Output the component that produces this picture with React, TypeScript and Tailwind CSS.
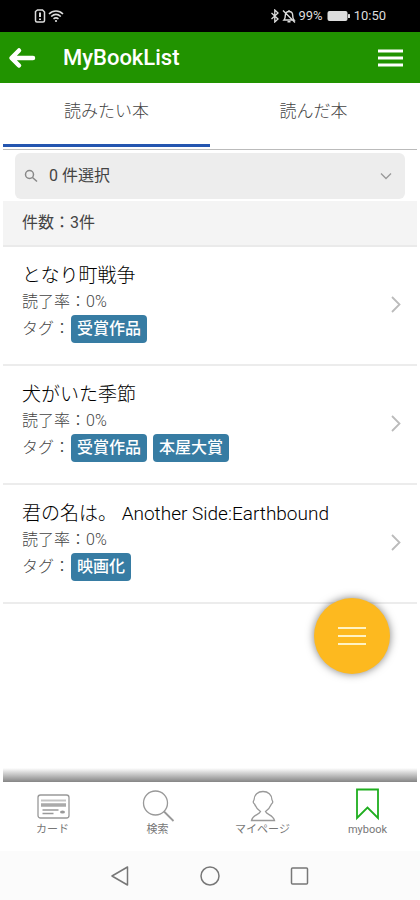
import { useState } from 'react';
import type { ReactNode } from 'react';

interface Book {
  id: number;
  title: string;
  progress: number;
  tags: string[];
}

const BOOKS: Book[] = [
  { id: 1, title: 'となり町戦争', progress: 0, tags: ['受賞作品'] },
  { id: 2, title: '犬がいた季節', progress: 0, tags: ['受賞作品', '本屋大賞'] },
  { id: 3, title: '君の名は。 Another Side:Earthbound', progress: 0, tags: ['映画化'] },
];

const TABS = ['読みたい本', '読んだ本'];

export default function App() {
  const [tab, setTab] = useState(0);

  return (
    <div className="flex min-h-screen flex-col bg-white font-[Roboto,'Noto_Sans_CJK_JP',sans-serif] text-[#444]">
      <StatusBar />
      <header className="flex h-[51px] items-center bg-[#219300] px-2 text-white">
        <button aria-label="戻る" className="w-7">
          <svg width="28" height="22" viewBox="0 0 28 22" fill="none" stroke="currentColor" strokeWidth="4.500" strokeLinecap="round" strokeLinejoin="round">
            <path d="M25 11H4M11 3.500L3.500 11l7.500 7.500" />
          </svg>
        </button>
        <h1 className="ml-[27px] flex-1 text-[22px] leading-7 font-medium">MyBookList</h1>
        <button aria-label="メニュー" className="mr-2">
          <svg width="26" height="20" viewBox="0 0 26 20" fill="none" stroke="currentColor" strokeWidth="3">
            <path d="M0 3h25M0 10h25M0 17h25" />
          </svg>
        </button>
      </header>

      <main className="relative flex-1 px-[3px]">
        <div role="tablist" className="flex h-[67px] border-b border-[#bbb]">
          {TABS.map((label, i) => (
            <button
              key={label}
              role="tab"
              aria-selected={tab === i}
              onClick={() => setTab(i)}
              className={`mb-0.5 flex-1 border-b-3 pb-1 text-[17px] font-light ${
                tab === i ? 'border-[#2456b0]' : 'border-transparent'
              }`}
            >
              {label}
            </button>
          ))}
        </div>

        <div className="relative mx-3 mt-[3px] mb-0.5">
          <SearchIcon className="pointer-events-none absolute top-4 left-[9px] size-[14px] text-[#888]" />
          <select
            aria-label="タグ選択"
            className="h-[46px] w-full appearance-none rounded-md bg-[#ededed] pl-[34px] text-base text-[#444]"
          >
            <option>0 件選択</option>
          </select>
          <svg className="pointer-events-none absolute top-[19px] right-[13px]" width="12" height="8" viewBox="0 0 12 8" fill="none" stroke="#999" strokeWidth="1.300">
            <path d="M1 1.500l5 5 5-5" />
          </svg>
        </div>

        <p className="flex h-[46px] items-center border-b-2 border-[#eaeaea] bg-[#f4f4f4] px-[19px] text-base">
          件数：{BOOKS.length}件
        </p>

        <ul>
          {BOOKS.map((book) => (
            <BookRow key={book.id} book={book} />
          ))}
        </ul>

        <button
          aria-label="操作メニュー"
          className="absolute right-[30px] bottom-[108px] flex size-[76px] items-center justify-center rounded-full bg-[#fdb91f] shadow-[0_0_8px_rgba(0,0,0,0.5)]"
        >
          <svg width="28" height="22" viewBox="0 0 28 22" fill="none" stroke="#fff3c4" strokeWidth="2">
            <path d="M0 3h28M0 11h28M0 19h28" />
          </svg>
        </button>
        <div className="absolute inset-x-[3px] bottom-0 h-[14px] bg-linear-to-b from-transparent to-[#858585]" />
      </main>

      <BottomNav />
      <SystemNav />
    </div>
  );
}

function StatusBar() {
  return (
    <div className="flex h-8 items-center justify-between bg-black px-[34px] text-[13px] text-[#ddd]">
      <div className="flex items-center gap-0.5">
        <svg width="12" height="14" viewBox="0 0 12 14" fill="none" stroke="currentColor" strokeWidth="1.500">
          <path d="M1.500 2.500L3.500 1h5l2 2v8.500a1.500 1.500 0 0 1-1.500 1.500H3a1.500 1.500 0 0 1-1.500-1.500z" />
          <path d="M6 3.500v4.500M6 9.500v1.500" strokeWidth="2" />
        </svg>
        <svg width="16" height="14" viewBox="0 0 16 14" fill="none" stroke="currentColor" strokeWidth="1.600">
          <path d="M1 5c4-4 10-4 14 0M3.200 7.500c3-2.700 6.600-2.700 9.600 0M5.500 9.800c1.700-1.300 3.300-1.300 5 0" />
          <circle cx="8" cy="12" r="1.100" fill="currentColor" stroke="none" />
        </svg>
      </div>
      <div className="flex items-center gap-0.5">
        <svg width="10" height="14" viewBox="0 0 10 14" fill="none" stroke="currentColor" strokeWidth="1.300">
          <path d="M1.500 4l6.500 6-3.200 3V1L8 4l-6.500 6" />
        </svg>
        <svg width="14" height="14" viewBox="0 0 14 14" fill="none" stroke="currentColor" strokeWidth="1.400">
          <path d="M2 11h10c-1-1-1.300-2-1.300-4.500C10.700 4 9.200 2.500 7 2.500S3.300 4 3.300 6.500C3.300 9 3 10 2 11zM5.500 12.800h3M7 1v1.500M1 1.500l12 12" />
        </svg>
        <span>99%</span>
        <svg className="mx-0.5" width="23" height="12" viewBox="0 0 23 12" fill="currentColor">
          <rect x="0.500" y="1" width="20" height="10" rx="2" />
          <rect x="21" y="4" width="2" height="4" rx="0.500" />
        </svg>
        <span>10:50</span>
      </div>
    </div>
  );
}

function BookRow({ book }: { book: Book }) {
  return (
    <li className="border-b-2 border-[#ececec]">
      <a href="#" className="flex items-center pt-4 pr-1 pb-5 pl-[19px]">
        <div className="flex-1">
          <h2 className="text-[19px] leading-[26px] font-light whitespace-pre text-black">{book.title}</h2>
          <p className="text-base leading-[25px] font-light">読了率：{book.progress}%</p>
          <p className="flex h-[30px] items-center text-base font-light">
            タグ：
            <span className="ml-px flex gap-1.5">
              {book.tags.map((tag) => (
                <span key={tag} className="flex h-7 items-center rounded bg-[#377ca3] px-1.5 font-medium text-white">
                  {tag}
                </span>
              ))}
            </span>
          </p>
        </div>
        <svg className="mr-3" width="10" height="18" viewBox="0 0 10 18" fill="none" stroke="#bbb" strokeWidth="1.800">
          <path d="M1 2L8.500 9.500 1 17" />
        </svg>
      </a>
    </li>
  );
}

function SearchIcon({ className }: { className?: string }) {
  return (
    <svg className={className} viewBox="0 0 14 14" fill="none" stroke="currentColor" strokeWidth="1.500">
      <circle cx="5.500" cy="5.500" r="4" />
      <path d="M8.500 8.500l4.500 4" />
    </svg>
  );
}

function NavItem({ label, children }: { label: string; children: ReactNode }) {
  return (
    <a href="#" className="flex flex-1 flex-col items-center text-[11px] leading-4 text-[#777]">
      <svg width="34" height="36" viewBox="0 0 34 36" fill="none" stroke="#999" strokeWidth="1.300">
        {children}
      </svg>
      {label}
    </a>
  );
}

function BottomNav() {
  return (
    <nav className="flex h-[69px] bg-white pt-1">
      <NavItem label="カード">
        <rect x="2" y="9" width="31" height="23" rx="2.500" />
        <path d="M5 14.500h25" strokeWidth="2" stroke="#c4c4c4" />
        <path d="M5 19h25" strokeWidth="3.500" stroke="#aaa" />
        <path d="M6.500 24h16M6.500 27.500h11" />
        <ellipse cx="26.500" cy="26" rx="2.500" ry="1.500" fill="#999" stroke="none" />
      </NavItem>
      <NavItem label="検索">
        <circle cx="14.500" cy="17" r="12" />
        <path d="M23 25.500L32.500 35" strokeWidth="1.800" />
      </NavItem>
      <NavItem label="マイページ">
        <path d="M14.500 25.500C11 23 9.500 20.500 8.500 18c-1.500-1-1.500-2.500-.5-4C8 8.500 12 5.500 17 5.500s9 3 9 8.500c1 1.500 1 3-.5 4-1 2.500-2.500 5-6 7.500 1.500 3.500 7.500 3 9 9h-23c1.500-6 7.500-5.500 9-9z" />
      </NavItem>
      <NavItem label="mybook">
        <path d="M6 3.500h21v28.500L16.500 21.500 6 32z" stroke="#1fae1f" strokeWidth="1.800" />
      </NavItem>
    </nav>
  );
}

function SystemNav() {
  return (
    <div className="flex h-[49px] items-center justify-center gap-[70px] bg-[#fbfbfb] text-[#777]">
      <button aria-label="Back">
        <svg width="20" height="20" viewBox="0 0 20 20" fill="none" stroke="currentColor" strokeWidth="1.500" strokeLinejoin="round">
          <path d="M17.500 1v18L2 10z" />
        </svg>
      </button>
      <button aria-label="Home">
        <svg width="20" height="20" viewBox="0 0 20 20" fill="none" stroke="currentColor" strokeWidth="1.500">
          <circle cx="10" cy="10" r="9" />
        </svg>
      </button>
      <button aria-label="Recents">
        <svg width="20" height="20" viewBox="0 0 20 20" fill="none" stroke="currentColor" strokeWidth="1.500">
          <rect x="1.500" y="2" width="16" height="16" rx="1" />
        </svg>
      </button>
    </div>
  );
}
